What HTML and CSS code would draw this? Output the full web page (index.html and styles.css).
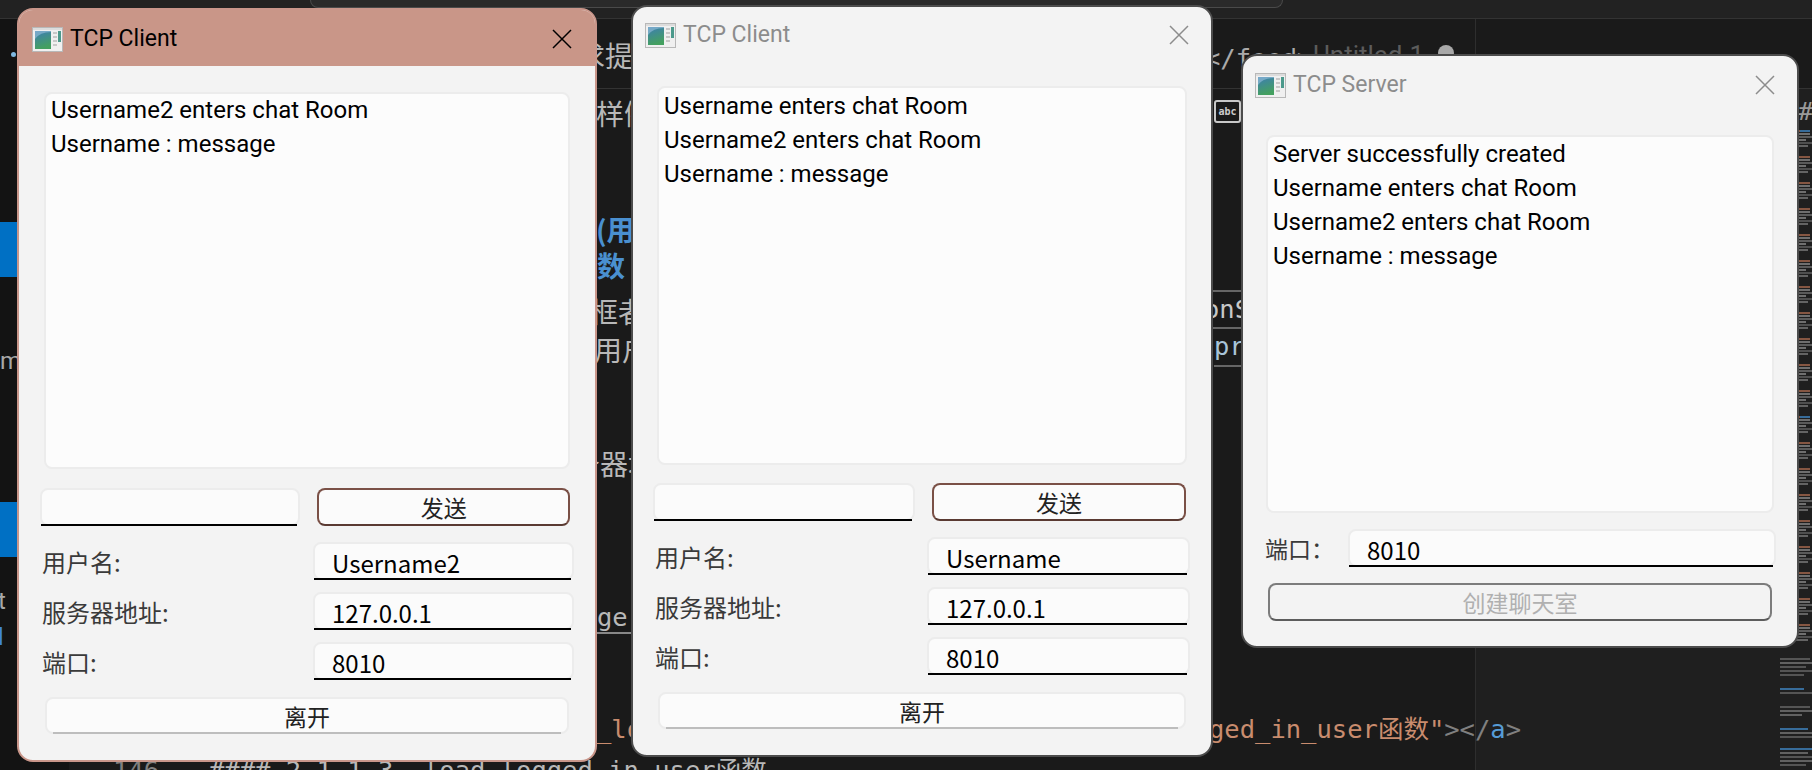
FILE: index.html
```html
<!DOCTYPE html>
<html lang="zh-CN">
<head>
  <meta charset="UTF-8">
  <title>TCP Chat</title>
  <link rel="stylesheet" href="styles.css">
</head>
<body>
  <svg class="defs" width="0" height="0">
    <defs>
      <linearGradient id="pane" x1="0" y1="0" x2="0.3" y2="1">
        <stop offset="0" stop-color="#3d7db4"/>
        <stop offset="1" stop-color="#44a060"/>
      </linearGradient>
      <symbol id="app-icon" viewBox="0 0 31 25">
        <rect x="0.5" y="0.5" width="30" height="24" fill="#f0f0f0" stroke="#b8b8b8"/>
        <rect x="1" y="1" width="29" height="2" fill="#dcdcdc"/>
        <rect x="3" y="4" width="16" height="18" fill="url(#pane)"/>
        <path d="M3 4 H19 V5 Q8 5 3 12 Z" fill="#8fb9d4" opacity="0.7"/>
        <rect x="21" y="5" width="4" height="2" fill="#c8c8c8"/>
        <rect x="21" y="9" width="4" height="2" fill="#c8c8c8"/>
        <rect x="21" y="13" width="4" height="2" fill="#c8c8c8"/>
        <rect x="21" y="17" width="4" height="2" fill="#c8c8c8"/>
        <rect x="26" y="4" width="3" height="11" fill="#4c9a8c"/>
      </symbol>
      <symbol id="close-x" viewBox="0 0 20 20">
        <path d="M1 1 L19 19 M19 1 L1 19" fill="none" stroke="currentColor" stroke-width="1.5"/>
      </symbol>
    </defs>
  </svg>

  <!-- editor behind the windows -->
  <div class="backdrop">
    <div class="topbar"><div class="searchbox"></div></div>
    <div class="sidebar">
      <div class="side-row side-row-a"></div>
      <div class="side-row side-row-b"></div>
    </div>
    <div class="tabline"></div>
    <div class="splitline"></div>
    <div class="right-pane"></div>

    <span class="dot"></span>
    <span class="side-txt side-m">m</span>
    <span class="side-txt side-t">t</span>
    <span class="side-txt side-d">d</span>

    <span class="frag f-qiu">求提</span>
    <span class="frag f-yang">样例</span>
    <span class="frag head f-yong">(用</span>
    <span class="frag head f-shu">数</span>
    <span class="frag f-kuang">框者</span>
    <span class="frag f-hu">用户</span>
    <span class="frag f-qi">务器地</span>
    <span class="code f-ge">ge</span>
    <span class="code orange f-lo">_lo</span>
    <span class="code f-feed">&lt;/feed&gt;</span>
    <span class="f-untitled">Untitled-1</span>
    <span class="f-moddot"></span>
    <span class="f-abc">abc</span>
    <span class="code f-ons">onS</span>
    <span class="code blueish f-pr">pr</span>
    <span class="code f-link"><span class="orange">ged_in_user函数"</span><span class="gray">&gt;&lt;/</span><span class="blue">a</span><span class="gray">&gt;</span></span>
    <span class="code gray f-num">146</span>
    <span class="code f-bottom">#### 2.1.1.3. load_logged_in_user函数</span>
    <span class="code f-hash">#</span>

    <svg class="minimap" width="34" height="640">
      <defs>
        <pattern id="mini-rows" width="34" height="26" patternUnits="userSpaceOnUse">
          <rect x="2" y="0" width="30" height="2" fill="#a8694e"/>
          <rect x="2" y="3" width="30" height="2" fill="#8a8a8a"/>
          <rect x="2" y="6" width="32" height="2" fill="#707070"/>
          <rect x="2" y="9" width="26" height="2" fill="#8a8a8a"/>
          <rect x="2" y="12" width="32" height="2" fill="#606060"/>
          <rect x="2" y="15" width="28" height="2" fill="#7a7a7a"/>
        </pattern>
      </defs>
      <rect x="0" y="0" width="34" height="520" fill="url(#mini-rows)"/>
      <rect x="22" y="0" width="10" height="2" fill="#3f86c4"/>
      <rect x="22" y="286" width="10" height="2" fill="#3f86c4"/>
      <rect x="2" y="528" width="30" height="2" fill="#666"/>
      <rect x="2" y="532" width="32" height="2" fill="#777"/>
      <rect x="2" y="536" width="26" height="2" fill="#666"/>
      <rect x="2" y="540" width="32" height="2" fill="#666"/>
      <rect x="2" y="544" width="24" height="2" fill="#666"/>
      <rect x="2" y="558" width="24" height="2" fill="#3f86c4"/>
      <rect x="2" y="562" width="32" height="2" fill="#666"/>
      <rect x="2" y="576" width="30" height="2" fill="#666"/>
      <rect x="2" y="580" width="32" height="2" fill="#777"/>
      <rect x="2" y="584" width="22" height="2" fill="#777"/>
      <rect x="2" y="598" width="28" height="2" fill="#3f86c4"/>
      <rect x="2" y="602" width="32" height="2" fill="#777"/>
      <rect x="2" y="606" width="32" height="2" fill="#666"/>
      <rect x="2" y="618" width="32" height="2" fill="#3f86c4"/>
      <rect x="2" y="622" width="28" height="2" fill="#777"/>
      <rect x="2" y="626" width="32" height="2" fill="#666"/>
      <rect x="2" y="630" width="32" height="2" fill="#777"/>
      <rect x="2" y="634" width="26" height="2" fill="#666"/>
    </svg>
  </div>

  <!-- client, active -->
  <section class="win win-a">
    <header class="titlebar">
      <svg class="app-icon"><use href="#app-icon"/></svg>
      <span class="win-title">TCP Client</span>
      <svg class="close"><use href="#close-x"/></svg>
    </header>
    <div class="win-body">
      <div class="log">
        <p>Username2 enters chat Room</p>
        <p>Username : message</p>
      </div>
      <div class="msg-row">
        <div class="field"><input type="text"></div>
        <button class="btn btn-send">发送</button>
      </div>
      <div class="form-rows">
        <label class="form-row"><span>用户名:</span><div class="field"><input type="text" value="Username2"></div></label>
        <label class="form-row"><span>服务器地址:</span><div class="field"><input type="text" value="127.0.0.1"></div></label>
        <label class="form-row"><span>端口:</span><div class="field"><input type="text" value="8010"></div></label>
      </div>
      <button class="btn btn-leave">离开</button>
    </div>
  </section>

  <!-- client, inactive -->
  <section class="win win-b">
    <header class="titlebar">
      <svg class="app-icon"><use href="#app-icon"/></svg>
      <span class="win-title">TCP Client</span>
      <svg class="close"><use href="#close-x"/></svg>
    </header>
    <div class="win-body">
      <div class="log">
        <p>Username enters chat Room</p>
        <p>Username2 enters chat Room</p>
        <p>Username : message</p>
      </div>
      <div class="msg-row">
        <div class="field"><input type="text"></div>
        <button class="btn btn-send">发送</button>
      </div>
      <div class="form-rows">
        <label class="form-row"><span>用户名:</span><div class="field"><input type="text" value="Username"></div></label>
        <label class="form-row"><span>服务器地址:</span><div class="field"><input type="text" value="127.0.0.1"></div></label>
        <label class="form-row"><span>端口:</span><div class="field"><input type="text" value="8010"></div></label>
      </div>
      <button class="btn btn-leave">离开</button>
    </div>
  </section>

  <!-- server -->
  <section class="win win-c">
    <header class="titlebar">
      <svg class="app-icon"><use href="#app-icon"/></svg>
      <span class="win-title">TCP Server</span>
      <svg class="close"><use href="#close-x"/></svg>
    </header>
    <div class="win-body">
      <div class="log">
        <p>Server successfully created</p>
        <p>Username enters chat Room</p>
        <p>Username2 enters chat Room</p>
        <p>Username : message</p>
      </div>
      <label class="port-row"><span>端口：</span><div class="field"><input type="text" value="8010"></div></label>
      <button class="btn btn-create" disabled>创建聊天室</button>
    </div>
  </section>
</body>
</html>
```

FILE: styles.css
```css
* {
  box-sizing: border-box;
}

html, body {
  margin: 0;
  height: 100%;
}

body {
  position: relative;
  width: 1812px;
  height: 770px;
  overflow: hidden;
  background-color: #1a1a1a;
  font-family: Roboto, "Noto Sans CJK SC", sans-serif;
}

.defs {
  position: absolute;
}

/* ---- editor behind ---- */
.backdrop {
  position: absolute;
  inset: 0;
  overflow: hidden;
  color: #c4c4c4;
}

.topbar {
  position: absolute;
  left: 0;
  top: 0;
  width: 100%;
  height: 19px;
  background-color: #222;
  border-bottom: 1px solid #333;
}

.searchbox {
  margin-left: 310px;
  width: 973px;
  height: 8px;
  background-color: #2a2a2a;
  border: 1px solid #4a4a4a;
  border-top: none;
  border-radius: 0 0 8px 8px;
}

.sidebar {
  position: absolute;
  left: 0;
  top: 19px;
  width: 69px;
  height: 751px;
  background-color: #131313;
}

.side-row {
  position: absolute;
  left: 0;
  width: 100%;
  height: 55px;
  background-color: #0070c4;
}
.side-row-a { top: 203px; }
.side-row-b { top: 483px; }

.tabline {
  position: absolute;
  left: 69px;
  top: 88px;
  width: 1743px;
  height: 1px;
  background-color: #333;
}

.splitline {
  position: absolute;
  left: 1475px;
  top: 19px;
  width: 1px;
  height: 751px;
  background-color: #2e2e2e;
}

.right-pane {
  position: absolute;
  left: 1476px;
  top: 89px;
  width: 336px;
  height: 681px;
  background-color: #1f1f1f;
}

.dot {
  position: absolute;
  left: 11px;
  top: 52px;
  width: 5px;
  height: 5px;
  border-radius: 50%;
  background-color: #7fb8e0;
}

.side-txt {
  position: absolute;
  left: 0;
  font-size: 24px;
  line-height: 30px;
  color: #a8a8a8;
}
.side-m { top: 346px; }
.side-t { top: 586px; left: -2px; }
.side-d { top: 622px; left: -10px; color: #3f86d8; }

.frag {
  position: absolute;
  font-family: "Noto Sans CJK SC", sans-serif;
  font-size: 28px;
  line-height: 38px;
  color: #b8b8b8;
  white-space: nowrap;
}
.head {
  font-weight: bold;
  color: #4a90d0;
}
.f-qiu { left: 577px; top: 36px; }
.f-yang { left: 596px; top: 94px; }
.f-yong { left: 596px; top: 210px; }
.f-shu { left: 597px; top: 246px; }
.f-kuang { left: 590px; top: 292px; }
.f-hu { left: 594px; top: 330px; }
.f-qi { left: 572px; top: 444px; }

.code {
  position: absolute;
  font-family: "DejaVu Sans Mono", "Noto Sans CJK SC", monospace;
  font-size: 25.5px;
  line-height: 38px;
  white-space: nowrap;
  color: #b8b8b8;
}
.orange { color: #c98c6e; }
.gray { color: #808080; }
.blue { color: #569cd6; }
.blueish { color: #a8c4d8; }

.f-ge {
  left: 597px;
  top: 598px;
  width: 36px;
  height: 36px;
  overflow: hidden;
  border-bottom: 2px solid #888;
}
.f-lo { left: 596px; top: 710px; }
.f-feed { left: 1205px; top: 39px; color: #aaa; }
.f-untitled {
  position: absolute;
  left: 1313px;
  top: 38px;
  font-size: 26px;
  line-height: 34px;
  color: #5c5c5c;
}
.f-moddot {
  position: absolute;
  left: 1438px;
  top: 45px;
  width: 16px;
  height: 16px;
  border-radius: 50%;
  background-color: #a8a8a8;
}
.f-abc {
  position: absolute;
  left: 1214px;
  top: 100px;
  width: 27px;
  height: 23px;
  border: 2px solid #c8c8c8;
  border-radius: 3px;
  font-family: "DejaVu Sans Mono", monospace;
  font-size: 10px;
  font-weight: bold;
  line-height: 19px;
  text-align: center;
  color: #ccc;
}
.f-ons {
  left: 1204px;
  top: 290px;
  height: 39px;
  border-top: 2px solid #666;
  border-bottom: 2px solid #666;
  line-height: 35px;
  color: #c8c8c8;
}
.f-pr {
  left: 1214px;
  top: 329px;
  width: 30px;
  overflow: hidden;
  height: 38px;
  border-bottom: 2px solid #666;
  line-height: 34px;
}
.f-link { left: 1209px; top: 710px; }
.f-num { left: 113px; top: 751px; }
.f-bottom { left: 209px; top: 751px; }
.f-hash { left: 1798px; top: 92px; color: #9a9a9a; }

.minimap {
  position: absolute;
  left: 1778px;
  top: 130px;
  filter: blur(0.7px);
  opacity: 0.75;
}

/* ---- windows ---- */
.win {
  --body-top: 23px;
  --log-x: 24px;
  --log-gap: 18px;
  --title-pad: 22px;
  --log-nudge: 0;
  position: absolute;
  display: flex;
  flex-direction: column;
  background-color: #f3f3f3;
  border: 2px solid #4c4c4c;
  border-radius: 16px;
  overflow: hidden;
}

.win-a {
  --body-top: 26px;
  --log-x: 25px;
  --log-gap: 19px;
  --title-pad: 23px;
  --log-nudge: -1px;
  left: 17px;
  top: 8px;
  width: 580px;
  height: 754px;
  border-color: #c9968a;
}

.win-b {
  --log-nudge: 1px;
  left: 631px;
  top: 5px;
  width: 582px;
  height: 752px;
}

.win-c {
  --log-x: 23px;
  --log-gap: 16px;
  left: 1241px;
  top: 54px;
  width: 558px;
  height: 594px;
}

.titlebar {
  display: flex;
  align-items: center;
  flex: none;
  height: 56px;
  padding: 2px var(--title-pad) 0 12px;
  color: #8c8c8c;
}

.win-a .titlebar {
  background-color: #c99688;
  color: #000;
  padding-left: 13px;
}

.win-b .titlebar {
  padding-top: 0;
}

.app-icon {
  flex: none;
  width: 31px;
  height: 25px;
}

.win-title {
  flex: 1;
  margin-left: 7px;
  font-size: 23px;
  line-height: 32px;
}

.close {
  flex: none;
  width: 20px;
  height: 20px;
}

.win-body {
  flex: 1;
  display: flex;
  flex-direction: column;
  padding-top: var(--body-top);
  min-height: 0;
}

.log {
  flex: 1;
  min-height: 0;
  margin: 0 var(--log-x) var(--log-gap);
  padding: 0 5px;
  background-color: #fcfcfc;
  border: 2px solid #ececec;
  border-radius: 8px;
  font-size: 24px;
  line-height: 34px;
  color: #000;
}

.log p {
  margin: 0;
}

.log p:first-child {
  margin-top: var(--log-nudge);
}

.field {
  position: relative;
  height: 38px;
  background-color: #fbfbfb;
  border: 2px solid #ececec;
  border-radius: 8px;
}

.field::after {
  content: "";
  position: absolute;
  left: -1px;
  right: 1px;
  bottom: -2px;
  height: 2px;
  background-color: #000;
}

.field input {
  display: block;
  width: 100%;
  height: 100%;
  padding: 2px 0 0 17px;
  border: none;
  outline: none;
  background: transparent;
  font-family: inherit;
  font-size: 24px;
  color: #000;
}

.btn {
  display: block;
  height: 38px;
  padding: 0;
  background-color: #fbfbfb;
  border: 2px solid #ececec;
  border-radius: 8px;
  font-family: "Noto Sans CJK SC", sans-serif;
  font-size: 23px;
  line-height: 32px;
  color: #222;
}

.msg-row {
  display: grid;
  grid-template-columns: 1.03fr 1fr;
  column-gap: 17px;
  padding: 0 25px 0 21px;
  margin-bottom: 16px;
}

.win-b .msg-row {
  padding-left: 20px;
}

.btn-send {
  border-color: #7a5046 #7a5046 #5a3a32;
}

.form-rows {
  display: flex;
  flex-direction: column;
  gap: 12px;
  padding: 0 21px 0 23px;
  margin-bottom: 17px;
}

.win-b .form-rows {
  padding-left: 22px;
}

.form-row {
  display: grid;
  grid-template-columns: 1fr 261px;
  align-items: center;
  font-family: "Noto Sans CJK SC", sans-serif;
  font-size: 24px;
  color: #3a3a3a;
}

.win-b .form-row {
  grid-template-columns: 1fr 263px;
}

.btn-leave {
  position: relative;
  height: 37px;
  margin: 0 26px 26px 26px;
}

.win-b .btn-leave {
  margin-left: 25px;
  margin-right: 25px;
}

.btn-leave::after {
  content: "";
  position: absolute;
  left: 6px;
  right: 6px;
  bottom: -2px;
  height: 2px;
  background-color: #bdbdbd;
}

.port-row {
  display: grid;
  grid-template-columns: 83px 1fr;
  align-items: center;
  margin: 0 21px 16px 22px;
  font-family: "Noto Sans CJK SC", sans-serif;
  font-size: 23px;
  color: #3a3a3a;
}

.btn-create {
  margin: 0 25px 25px 25px;
  background-color: #f3f3f3;
  border-color: #7c7c7c #7c7c7c #5c5c5c;
  color: #b0b0b0;
}
```
